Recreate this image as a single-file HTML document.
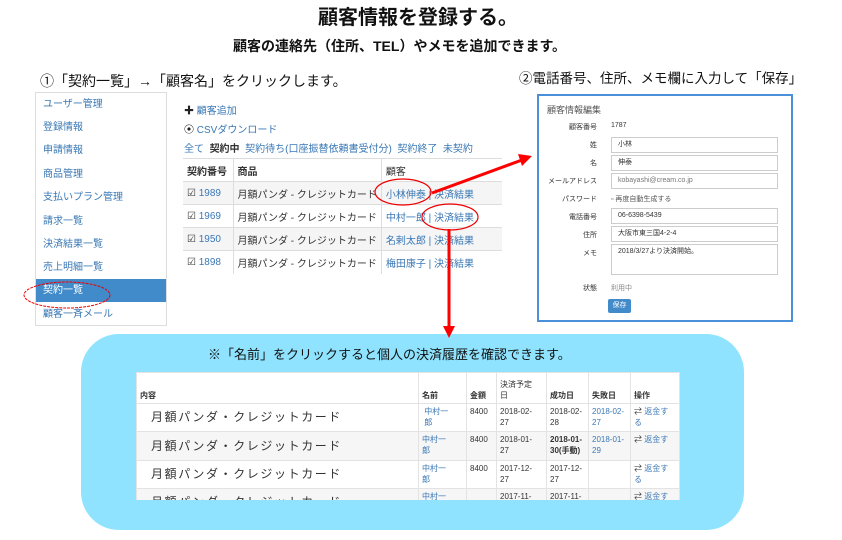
<!DOCTYPE html>
<html><head><meta charset="utf-8"><style>
*{margin:0;padding:0;box-sizing:border-box}
body{width:842px;height:540px;background:#fff;position:relative;overflow:hidden;font-family:"Liberation Sans","Noto Sans CJK JP",sans-serif;color:#333}
.a{position:absolute;white-space:nowrap}
.lk{color:#3a78b5}
.side div{position:absolute;left:0;width:130px;height:23px;line-height:23px;padding-left:7px;font-size:10px;color:#3a78b5}
table{border-collapse:collapse}
.t1 td{height:23px;font-size:10px;border-top:1px solid #ddd;padding:0 4px;white-space:nowrap}
.t1 tr:nth-child(even) td{background:#f5f5f5}
.f{position:absolute;font-size:7px;color:#333}
.in{position:absolute;left:611px;width:167px;height:16px;border:1px solid #ccc;font-size:7px;line-height:14px;padding-left:6px;color:#333;background:#fff}
.lb{position:absolute;width:60px;text-align:right;left:537px;font-size:7px;color:#333}
.t2 td{border:1px solid #e3e3e3;font-size:8px;padding:2px 3px;vertical-align:top;line-height:11px}
.t2 tr:nth-child(odd) td{background:#f6f6f6}
.t2 tr:first-child td{background:#fff;vertical-align:bottom;font-weight:bold;font-size:8px}
.big{font-size:12px!important;letter-spacing:1.6px;vertical-align:middle!important;padding-left:14px!important}
</style></head><body>
<div class="a" style="left:318px;top:1px;font-size:20px;font-weight:bold;color:#111">顧客情報を登録する。</div>
<div class="a" style="left:233px;top:36px;font-size:14px;font-weight:bold;color:#111">顧客の連絡先（住所、TEL）やメモを追加できます。</div>
<div class="a" style="left:40px;top:71px;font-size:14px;color:#111">①「契約一覧」→「顧客名」をクリックします。</div>
<div class="a" style="left:519px;top:67px;font-size:13.5px;color:#111">②電話番号、住所、メモ欄に入力して「保存」</div>

<div class="side" style="position:absolute;left:35px;top:92px;width:132px;height:234px;border:1px solid #ddd">
<div style="top:0">ユーザー管理</div><div style="top:23px">登録情報</div><div style="top:46px">申請情報</div><div style="top:70px">商品管理</div><div style="top:93px">支払いプラン管理</div><div style="top:117px">請求一覧</div><div style="top:140px">決済結果一覧</div><div style="top:163px">売上明細一覧</div>
<div style="top:186px;background:#428bca;color:#fff">契約一覧</div><div style="top:210px">顧客一斉メール</div>
</div>

<div class="a lk" style="left:184px;top:102px;font-size:10px"><b style="color:#222">✚</b> 顧客追加</div>
<div class="a lk" style="left:184px;top:121px;font-size:10px"><b style="color:#222">⦿</b> CSVダウンロード</div>
<div class="a" style="left:184px;top:140px;font-size:10px"><span class="lk">全て</span>&nbsp; <b>契約中</b>&nbsp; <span class="lk">契約待ち(口座振替依頼書受付分)&nbsp; 契約終了&nbsp; 未契約</span></div>
<table class="t1" style="position:absolute;left:183px;top:158px;width:319px">
<tr><td style="width:50px;border-right:1px solid #ddd"><b>契約番号</b></td><td style="width:145px;border-right:1px solid #ddd"><b>商品</b></td><td>顧客</td></tr>
<tr><td style="border-right:1px solid #ddd">☑ <span class="lk">1989</span></td><td style="border-right:1px solid #ddd">月額パンダ - クレジットカード</td><td class="lk">小林伸泰 | 決済結果</td></tr>
<tr><td style="border-right:1px solid #ddd">☑ <span class="lk">1969</span></td><td style="border-right:1px solid #ddd">月額パンダ - クレジットカード</td><td class="lk">中村一郎 | 決済結果</td></tr>
<tr><td style="border-right:1px solid #ddd">☑ <span class="lk">1950</span></td><td style="border-right:1px solid #ddd">月額パンダ - クレジットカード</td><td class="lk">名剌太郎 | 決済結果</td></tr>
<tr><td style="border-right:1px solid #ddd">☑ <span class="lk">1898</span></td><td style="border-right:1px solid #ddd">月額パンダ - クレジットカード</td><td class="lk">梅田康子 | 決済結果</td></tr>
</table>

<div style="position:absolute;left:537px;top:94px;width:256px;height:228px;border:2px solid #4a90d9;background:#fff"></div>
<div class="a" style="left:547px;top:103px;font-size:9px;color:#555">顧客情報編集</div>
<div class="lb" style="top:122px">顧客番号</div><div class="f" style="left:611px;top:122px">1787</div>
<div class="lb" style="top:140px">姓</div><div class="in" style="top:137px">小林</div>
<div class="lb" style="top:158px">名</div><div class="in" style="top:155px">伸泰</div>
<div class="lb" style="top:176px">メールアドレス</div><div class="in" style="top:173px;color:#777">kobayashi@cream.co.jp</div>
<div class="lb" style="top:194px">パスワード</div><div class="f" style="left:611px;top:194px;color:#555">▫ 再度自動生成する</div>
<div class="lb" style="top:212px">電話番号</div><div class="in" style="top:208px">06-6398-5439</div>
<div class="lb" style="top:230px">住所</div><div class="in" style="top:226px">大阪市東三国4-2-4</div>
<div class="lb" style="top:248px">メモ</div><div class="in" style="top:244px;height:31px">2018/3/27より決済開始。</div>
<div class="lb" style="top:283px">状態</div><div class="f" style="left:611px;top:283px;color:#888">利用中</div>
<div class="a" style="left:608px;top:299px;width:23px;height:14px;background:#428bca;color:#fff;font-size:7px;line-height:14px;text-align:center;border-radius:2px">保存</div>

<div style="position:absolute;left:81px;top:334px;width:663px;height:196px;background:#8fe3fe;border-radius:38px"></div>
<div class="a" style="left:208px;top:344px;font-size:13px;color:#111">※「名前」をクリックすると個人の決済履歴を確認できます。</div>
<div style="position:absolute;left:136px;top:372px;width:544px;height:128px;overflow:hidden;background:#fff">
<table class="t2" style="width:544px">
<tr><td style="width:282px;height:31px">内容</td><td style="width:48px">名前</td><td style="width:30px">金額</td><td style="width:50px;font-weight:normal">決済予定<br>日</td><td style="width:42px">成功日</td><td style="width:42px">失敗日</td><td>操作</td></tr>
<tr><td class="big" style="height:28px">月額パンダ・クレジットカード</td><td class="lk">&nbsp;中村一<br>&nbsp;郎</td><td>8400</td><td>2018-02-<br>27</td><td>2018-02-<br>28</td><td class="lk">2018-02-<br>27</td><td>⇄ <span class="lk">返金す<br>る</span></td></tr>
<tr><td class="big" style="height:29px">月額パンダ・クレジットカード</td><td class="lk">中村一<br>郎</td><td>8400</td><td>2018-01-<br>27</td><td><b>2018-01-<br>30(手動)</b></td><td class="lk">2018-01-<br>29</td><td>⇄ <span class="lk">返金す</span></td></tr>
<tr><td class="big" style="height:28px">月額パンダ・クレジットカード</td><td class="lk">中村一<br>郎</td><td>8400</td><td>2017-12-<br>27</td><td>2017-12-<br>27</td><td></td><td>⇄ <span class="lk">返金す<br>る</span></td></tr>
<tr><td class="big" style="height:28px">月額パンダ・クレジットカード</td><td class="lk">中村一<br>郎</td><td></td><td>2017-11-</td><td>2017-11-</td><td></td><td>⇄ <span class="lk">返金す</span></td></tr>
</table></div>

<svg width="842" height="540" style="position:absolute;left:0;top:0">
<ellipse cx="403" cy="192" rx="28" ry="13" fill="none" stroke="#e00" stroke-width="1.2"/>
<ellipse cx="450" cy="217" rx="28" ry="13" fill="none" stroke="#e00" stroke-width="1.2"/>
<ellipse cx="67" cy="295" rx="43" ry="13" fill="none" stroke="#e00" stroke-width="1" stroke-dasharray="3,1"/>
<line x1="432" y1="193" x2="522" y2="160" stroke="#f00" stroke-width="3"/>
<polygon points="532,156 518,154 522,166" fill="#f00"/>
<line x1="449" y1="229" x2="449" y2="328" stroke="#f00" stroke-width="3"/>
<polygon points="443,326 455,326 449,338" fill="#f00"/>
</svg>
</body></html>
